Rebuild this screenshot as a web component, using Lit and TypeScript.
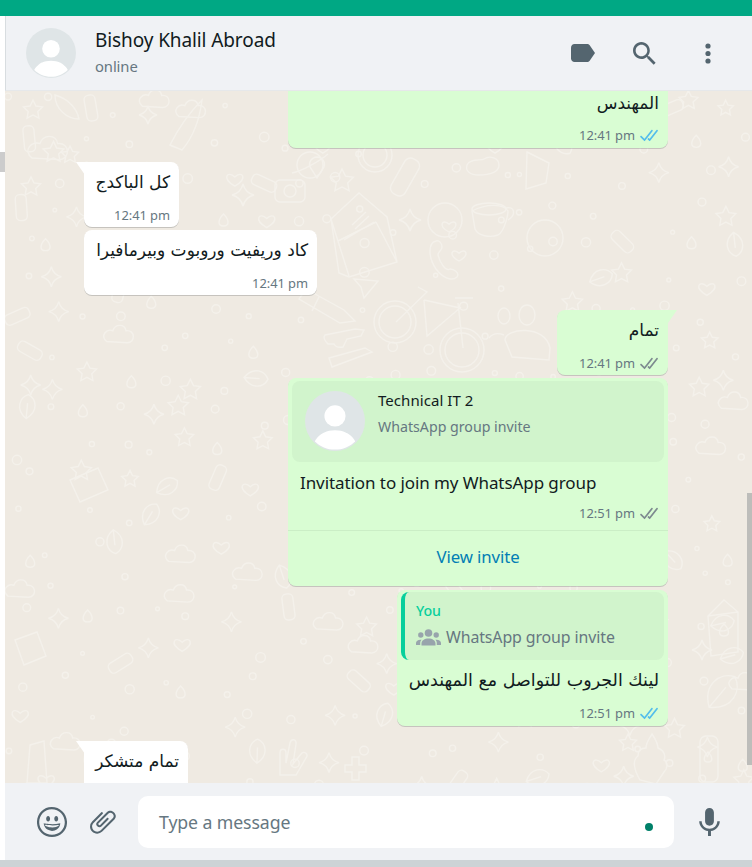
import { LitElement, html, css, svg } from "lit";
import { customElement } from "lit/decorators.js";

const DBL = "M15.01 3.316l-.478-.372a.365.365 0 0 0-.51.063L8.666 9.879a.32.32 0 0 1-.484.033l-.358-.325a.319.319 0 0 0-.484.032l-.378.483a.418.418 0 0 0 .036.541l1.32 1.266c.143.14.361.125.484-.033l6.272-8.048a.366.366 0 0 0-.064-.512zm-4.1 0l-.478-.372a.365.365 0 0 0-.51.063L4.566 9.879a.32.32 0 0 1-.484.033L1.891 7.769a.366.366 0 0 0-.515.006l-.423.433a.364.364 0 0 0 .006.514l3.258 3.185c.143.14.361.125.484-.033l6.272-8.048a.365.365 0 0 0-.063-.51z";

const avatar = (size: number) => html`<svg class="avatar" width=${size} height=${size} viewBox="0 0 212 212"><circle cx="106" cy="106" r="106" fill="#dfe5e7"/><path fill="#fff" d="M173.561 171.615a62.767 62.767 0 0 0-2.065-2.955 67.7 67.7 0 0 0-2.608-3.299 70.112 70.112 0 0 0-3.184-3.527 71.097 71.097 0 0 0-5.924-5.47 72.458 72.458 0 0 0-10.204-7.026 75.2 75.2 0 0 0-5.98-3.055c-.062-.028-.118-.059-.18-.087-9.792-4.44-22.106-7.529-37.416-7.529s-27.624 3.089-37.416 7.529c-.338.153-.653.318-.985.474a75.37 75.37 0 0 0-6.229 3.298 72.589 72.589 0 0 0-9.15 6.395 71.243 71.243 0 0 0-5.924 5.47 70.064 70.064 0 0 0-3.184 3.527 67.142 67.142 0 0 0-2.609 3.299 63.292 63.292 0 0 0-2.065 2.955 56.33 56.33 0 0 0-1.447 2.324c-.033.056-.073.119-.104.174a47.92 47.92 0 0 0-1.07 1.926c-.559 1.068-.818 1.678-.818 1.678v.398c18.285 17.927 43.322 28.985 70.945 28.985 27.678 0 52.761-11.103 71.055-29.095v-.289s-.619-1.45-1.992-3.778a58.346 58.346 0 0 0-1.446-2.322z"/><circle cx="106" cy="88" r="37.4" fill="#fff"/></svg>`;

const checks = (read: boolean) => html`<svg class="checks" width="20" height="19" viewBox="0 0 16 15"><path fill=${read ? "#53bdeb" : "#7d8a8f"} d=${DBL}/></svg>`;

const star = (x: number, y: number, r: number) => {
  let d = "";
  for (let i = 0; i < 10; i++) {
    const a = -Math.PI / 2 + (i * Math.PI) / 5;
    const q = i % 2 ? r * 0.5 : r;
    d += `${i ? "L" : "M"}${(x + q * Math.cos(a)).toFixed(1)} ${(y + q * Math.sin(a)).toFixed(1)}`;
  }
  return svg`<path d="${d}Z"/>`;
};
const sparkle = (x: number, y: number, r: number) => {
  const k = r * 0.2;
  return svg`<path d="M${x} ${y - r}Q${x + k} ${y - k} ${x + r} ${y}Q${x + k} ${y + k} ${x} ${y + r}Q${x - k} ${y + k} ${x - r} ${y}Q${x - k} ${y - k} ${x} ${y - r}Z"/>`;
};
const heart = (x: number, y: number, s: number) =>
  svg`<path d="M${x} ${y + s}C${x - 2 * s} ${y - 0.1 * s} ${x - s} ${y - 1.3 * s} ${x} ${y - 0.3 * s}C${x + s} ${y - 1.3 * s} ${x + 2 * s} ${y - 0.1 * s} ${x} ${y + s}Z"/>`;
const blob = (x: number, y: number, s: number) =>
  svg`<path d="M${x - s} ${y + 0.5 * s}C${x - 1.6 * s} ${y} ${x - s} ${y - 0.6 * s} ${x - 0.5 * s} ${y - 0.4 * s}C${x - 0.3 * s} ${y - s} ${x + 0.5 * s} ${y - s} ${x + 0.6 * s} ${y - 0.4 * s}C${x + 1.4 * s} ${y - 0.5 * s} ${x + 1.4 * s} ${y + 0.6 * s} ${x + 0.7 * s} ${y + 0.6 * s}Z"/>`;
const capsule = (x: number, y: number, w: number, h: number, rot: number) =>
  svg`<rect x=${x - w / 2} y=${y - h / 2} width=${w} height=${h} rx=${Math.min(w, h) / 2.5} transform="rotate(${rot} ${x} ${y})"/>`;
const drop = (x: number, y: number, s: number) =>
  svg`<path d="M${x} ${y - s}C${x + s} ${y} ${x + s} ${y + s} ${x} ${y + s}C${x - s} ${y + s} ${x - s} ${y} ${x} ${y - s}Z"/>`;
const leaf = (x: number, y: number, s: number, rot: number) =>
  svg`<path transform="rotate(${rot} ${x} ${y})" d="M${x} ${y + s}C${x - s} ${y + 0.3 * s} ${x - 0.7 * s} ${y - 0.7 * s} ${x} ${y - s}C${x + 0.7 * s} ${y - 0.7 * s} ${x + s} ${y + 0.3 * s} ${x} ${y + s}ZM${x} ${y + s}V${y - 0.3 * s}"/>`;

function scatter() {
  const out: unknown[] = [];
  let seed = 23;
  const rnd = () => ((seed = (seed * 16807) % 2147483647) / 2147483647);
  for (let gy = 96; gy < 790; gy += 34) {
    for (let gx = 8; gx < 750; gx += 34) {
      const x = gx + rnd() * 24;
      const y = gy + rnd() * 24;
      const k = rnd();
      const inDetail = x > 300 && x < 560 && y > 148 && y < 380;
      if (inDetail || k < 0.66) {
        if (k < 0.5) out.push(svg`<circle cx=${x} cy=${y} r=${1.8 + rnd() * 3}/>`);
        continue;
      }
      if (k < 0.72) out.push(star(x, y, 8 + rnd() * 3));
      else if (k < 0.77) out.push(sparkle(x, y, 10));
      else if (k < 0.82) out.push(blob(x, y, 12));
      else if (k < 0.87) out.push(capsule(x, y, 11, 26, rnd() * 180));
      else if (k < 0.91) out.push(heart(x, y, 7));
      else if (k < 0.95) out.push(drop(x, y, 6));
      else out.push(leaf(x, y, 12, rnd() * 180));
    }
  }
  return out;
}

const wallpaper = svg`<g transform="translate(-5 -91)">
  ${scatter()}
  ${star(342, 181, 12)}
  <path d="M331 219l28-26 28 24 10 45-48 15-10-4zM331 219l18 57M344 240l30-18M376 222l21 40M338 241l38-19M352 225l14-13 M355 229l14-13"/>
  <circle cx="395" cy="322" r="21"/><circle cx="395" cy="322" r="16"/><circle cx="462" cy="350" r="22"/><circle cx="462" cy="350" r="17"/>
  <path d="M396 322l31-30-9-5M424 300l36 8-33 28-3-36M458 303l5 45M455 298h18"/>
  ${capsule(405, 177, 16, 40, 30)}
  ${sparkle(410, 220, 11)}
  <circle cx="445" cy="220" r="17"/>${heart(449, 226, 6)}
  <path d="M472 211c15-8 32-7 36 0 0 3-3 20-10 24-8 3-20 1-23-6zM506 208c8-2 11 6 2 12"/><ellipse cx="489" cy="209" rx="17" ry="6"/>
  <circle cx="545" cy="238" r="18"/>
  <path d="M436 241c-8 2-8 16 0 28 6 8 15 13 21 8 3-4-3-8-7-8-4 3-10-6-12-14 0-4 4-4 4-8 0-4-3-7-6-6z"/>${heart(459, 255, 6)}
  <path d="M317 157a7.500 7.500 0 0 1 7 10l-7 11-7-11a7.500 7.500 0 0 1 7-10z"/>
  <circle cx="375" cy="155" r="17"/><circle cx="375" cy="155" r="12"/>
  <path d="M306 289l38 21 11 11-15 2-41-24z M319 297l-7 14"/><path d="M354 279l24 2-14 17-3-11z"/>
  <ellipse cx="504" cy="316" rx="6" ry="8"/><ellipse cx="527" cy="315" rx="8" ry="10"/><path d="M505 340c0-12 40-16 45 8l-1 12-37-3zM489 338c4-5 10-5 15-3"/>
  <path d="M467 165c3-7 14-4 17-6 6-4 15-1 15 6s-9 10-20 10c-9 0-14-4-12-10z"/>
  <path d="M325 335l30-6 9 1-3 6-14 3-4 8c-6 1-8-1-9-3h-6c-3-3-5-7-3-9zM329 358l36-10 7 4-40 15z"/>
  <path d="M527 152l22 11-3 20-20 6z"/>
  ${star(33, 110, 10)}${star(70, 155, 9)}${sparkle(148, 115, 9)}${blob(48, 150, 16)}
  <path d="M55 95c14 4 22 14 24 24-12 0-24-10-24-24zM170 145c10-20 22-35 32-45-2 16-8 36-20 50-4-2-8-3-12-5z"/>
  <circle cx="310" cy="165" r="13"/><path d="M292 173c10-2 28-12 36-19"/><rect x="275" y="180" width="30" height="22" rx="5"/><circle cx="290" cy="191" r="6"/>${sparkle(243, 195, 11)}
  <path d="M724 600l14 12v40l-27 4-3-40zM708 616l30-4"/>${drop(724, 630, 6)}${sparkle(702, 650, 10)}${leaf(722, 692, 20, 40)}
  <path d="M640 780c-6-10-8-20-2-24 0-6 4-8 8-8 0-6 4-10 6-14 4 6 6 10 6 14 6 2 8 8 6 12 4 2 4 8 0 12l-8 12z"/>${star(628, 743, 9)}
  <rect x="700" y="736" width="18" height="46" rx="6"/>${drop(708, 757, 5)}
  <path d="M280 775v-22c0-5 6-5 6 0v10l4-20c1-5 7-4 6 1l-3 20 8-10c3-4 8 0 5 4l-10 17zM345 765h7v-8h7v8h7v7h-7v8h-7v-8h-7z"/>
  <path d="M30 745l14-4 3 42H27zM15 640l22-8 9 24-22 9zM70 480l28-12 10 22-28 12z"/>
</g>`;

interface Msg { out: boolean; width: number; text: string; time?: string; read?: boolean; tail?: boolean; top: number; clipped?: boolean }
const plain: Record<string, Msg> = {
  a: { out: true, width: 380, text: "المهندس", time: "12:41 pm", read: true, top: 0, clipped: true },
  b: { out: false, width: 95, text: "كل الباكدج", time: "12:41 pm", tail: true, top: 14 },
  c: { out: false, width: 233, text: "كاد وريفيت وروبوت وبيرمافيرا", time: "12:41 pm", top: 3 },
  d: { out: true, width: 111, text: "تمام", time: "12:41 pm", read: false, tail: true, top: 15 },
  g: { out: false, width: 104, text: "تمام متشكر", tail: true, top: 15 },
};

@customElement("app-root")
export class AppRoot extends LitElement {
  static styles = css`
    :host { display: flex; flex-direction: column; width: 752px; height: 867px; overflow: hidden; background: #fff; font-family: "Noto Sans", "DejaVu Sans", sans-serif; color: #111b21; }
    .top { height: 16px; background: #00a884; flex: none; }
    .body { flex: 1; display: flex; min-height: 0; }
    .gutter { width: 5px; flex: none; padding-top: 136px; box-sizing: border-box; }
    .gutter i { display: block; height: 20px; background: #ccc; }
    .main { flex: 1; display: flex; flex-direction: column; min-width: 0; }
    header { height: 75px; flex: none; box-sizing: border-box; display: flex; align-items: center; background: #f0f2f5; border-left: 1px solid #d8dde0; border-bottom: 1px solid #e6e8ea; padding: 0 41px 0 20px; }
    .avatar { display: block; flex: none; }
    .who { margin-left: 19px; display: flex; flex-direction: column; margin-top: -2px; }
    .name { font-size: 19px; line-height: 24px; letter-spacing: -.1px; }
    .status { font-size: 14.8px; line-height: 20px; color: #667781; margin-top: 4px; letter-spacing: -.1px; }
    .actions { margin-left: auto; display: flex; align-items: center; color: #54656f; }
    .actions svg { display: block; fill: #54656f; }
    .a-label { margin-right: 38px; }
    .a-search { margin-right: 49px; }
    .chat { flex: 1; position: relative; overflow: hidden; min-height: 0; background: #efeae2; display: flex; flex-direction: column; padding: 0 84px 0 79px; }
    .paper { position: absolute; left: 0; top: 0; fill: none; stroke: #f4f1eb; stroke-width: 1.4; }
    .thumb { position: absolute; right: 0; top: 402px; width: 5px; height: 272px; background: #bdbdba; }
    .row { display: flex; position: relative; flex: none; }
    .row.out { justify-content: flex-end; }
    .bubble { position: relative; box-sizing: border-box; border-radius: 8px; background: #fff; box-shadow: 0 1px .5px rgba(11,20,26,.18); flex: none; }
    .out .bubble { background: #d9fdd3; }
    .tail::before { content: ""; position: absolute; top: 0; width: 9px; height: 13px; background: inherit; }
    .in .tail { border-top-left-radius: 0; }
    .out .tail { border-top-right-radius: 0; }
    .in .tail::before { left: -8px; clip-path: polygon(0 0, 100% 0, 100% 100%); }
    .out .tail::before { right: -9px; clip-path: polygon(0 0, 100% 0, 0 100%); }
    .plain { padding: 10px 9px 0 11px; }
    .plain.clipped { padding-top: 2px; padding-bottom: 1px; border-top-left-radius: 0; border-top-right-radius: 0; }
    .plain.clipped .meta { margin-top: 9px; }
    .plain.cut { padding-bottom: 20px; }
    .ar { direction: rtl; font-family: "DejaVu Sans", sans-serif; font-size: 17px; line-height: 21px; white-space: nowrap; }
    .meta { height: 24px; display: flex; justify-content: flex-end; align-items: center; margin-top: 10px; font-size: 12.9px; color: #667781; white-space: nowrap; letter-spacing: -.05px; }
    .meta .checks { margin-left: 4px; }
    .card { margin: 3px 4px 0; height: 81px; box-sizing: border-box; padding: 10px 13px; border-radius: 8px; background: #d1f4cc; display: flex; }
    .card-txt { margin-left: 13px; display: flex; flex-direction: column; }
    .card-title { font-size: 15px; line-height: 20px; margin-top: -1px; letter-spacing: .05px; }
    .card-sub { font-size: 14.2px; line-height: 20px; margin-top: 7px; color: #667781; letter-spacing: 0; }
    .inv { padding: 10px 9px 0 12px; }
    .inv-text { font-size: 17px; line-height: 21px; letter-spacing: -.08px; }
    .inv .line { margin-top: 8px; }
    .view { border-top: 1px solid #cbeec6; margin-top: 5px; height: 56px; padding-bottom: 5px; box-sizing: border-box; display: flex; align-items: center; justify-content: center; color: #027eb5; font-size: 16.8px; letter-spacing: -.1px; }
    .quote { margin: 2px 4px 0; height: 68px; box-sizing: border-box; border-radius: 8px; background: #d1f4cc; border-left: 4px solid #06cf9c; padding-left: 11px; display: flex; flex-direction: column; }
    .q-who { color: #06cf9c; font-size: 14.2px; line-height: 20px; margin-top: 9px; font-weight: 500; letter-spacing: -.1px; }
    .q-sub { display: flex; align-items: center; margin-top: 5px; font-size: 15.9px; line-height: 22px; color: #667781; letter-spacing: -.1px; }
    .q-sub svg { display: block; margin-right: 5px; fill: #98a4ac; flex: none; }
    .reply { padding: 10px 9px 1px 10px; }
    .reply .ar { font-size: 17.5px; }
    footer { height: 77px; flex: none; background: #f0f2f5; display: flex; align-items: center; padding-left: 32px; box-sizing: border-box; }
    footer svg { display: block; flex: none; }
    .smile { fill: #54656f; margin-right: 23px; }
    .clip { fill: #54656f; margin-right: 22px; }
    .input { width: 536px; height: 52px; flex: none; box-sizing: border-box; background: #fff; border-radius: 10px; display: flex; align-items: center; justify-content: space-between; padding: 0 21px; font-size: 17.7px; color: #667781; letter-spacing: -.1px; margin-top: 1px; }
    .dot { width: 8px; height: 8px; border-radius: 50%; background: #008069; margin: 10px 0 0; }
    .mic { fill: #54656f; margin-left: 25px; }
    .bottom { height: 7px; flex: none; background: #ccd3d6; }
  `;

  private plainRow(m: Msg) {
    return html`<div class="row ${m.out ? "out" : "in"}" style="margin-top:${m.top}px">
      <div class="bubble plain ${m.tail ? "tail" : ""} ${m.clipped ? "clipped" : ""} ${m.time ? "" : "cut"}" style="width:${m.width}px">
        <div class="ar">${m.text}</div>
        ${m.time ? html`<div class="meta">${m.time}${m.out ? checks(!!m.read) : ""}</div>` : ""}
      </div>
    </div>`;
  }

  render() {
    return html`
      <div class="top"></div>
      <div class="body">
        <div class="gutter"><i></i></div>
        <div class="main">
          <header>
            ${avatar(50)}
            <div class="who">
              <div class="name">Bishoy Khalil Abroad</div>
              <div class="status">online</div>
            </div>
            <div class="actions">
              <svg class="a-label" width="24" height="18" viewBox="0 0 24 18"><path d="M3.500 0H16c1.100 0 2 .5 2.700 1.300L24 9l-5.300 7.700c-.7.800-1.600 1.300-2.700 1.300H3.500C1.600 18 0 16.400 0 14.500v-11C0 1.600 1.600 0 3.500 0z"/></svg>
              <svg class="a-search" width="23" height="23" viewBox="3 3 18.200 18.200"><path d="M15.900 14.300H15l-.3-.3c1-1.100 1.600-2.700 1.600-4.300 0-3.700-3-6.700-6.700-6.700S3 6 3 9.700s3 6.700 6.700 6.700c1.600 0 3.200-.6 4.300-1.600l.3.3v.8l5.100 5.100 1.500-1.500-5-5.200zm-6.200 0c-2.600 0-4.600-2.100-4.600-4.600s2.100-4.600 4.600-4.600 4.600 2.100 4.600 4.600-2 4.600-4.600 4.600z"/></svg>
              <svg width="6" height="21" viewBox="0 0 6 21"><circle cx="3" cy="3" r="2.600"/><circle cx="3" cy="10.500" r="2.600"/><circle cx="3" cy="18" r="2.600"/></svg>
            </div>
          </header>
          <div class="chat">
            <svg class="paper" width="747" height="692" viewBox="0 0 747 692">${wallpaper}</svg>
            <div class="thumb"></div>
            ${this.plainRow(plain.a)}
            ${this.plainRow(plain.b)}
            ${this.plainRow(plain.c)}
            ${this.plainRow(plain.d)}
            <div class="row out" style="margin-top:3px">
              <div class="bubble" style="width:380px">
                <div class="card">
                  ${avatar(60)}
                  <div class="card-txt">
                    <div class="card-title">Technical IT 2</div>
                    <div class="card-sub">WhatsApp group invite</div>
                  </div>
                </div>
                <div class="inv">
                  <div class="inv-text">Invitation to join my WhatsApp group</div>
                  <div class="meta line">12:51 pm${checks(false)}</div>
                </div>
                <div class="view">View invite</div>
              </div>
            </div>
            <div class="row out" style="margin-top:4px">
              <div class="bubble" style="width:271px">
                <div class="quote">
                  <div class="q-who">You</div>
                  <div class="q-sub"><svg width="25" height="17" viewBox="0 0 25 17"><circle cx="12.500" cy="4" r="3.800"/><circle cx="4.800" cy="6" r="2.700"/><circle cx="20.200" cy="6" r="2.700"/><path d="M5.500 16.500v-2c0-3 3-5 7-5s7 2 7 5v2zM0 16v-2c0-2 1.800-3.300 4.500-3.300.4 0 .8 0 1.100.1-.9.900-1.400 2.100-1.400 3.500V16zM25 16v-2c0-2-1.800-3.300-4.500-3.300-.4 0-.8 0-1.100.1.900.9 1.400 2.100 1.400 3.500V16z"/></svg>WhatsApp group invite</div>
                </div>
                <div class="reply">
                  <div class="ar">لينك الجروب للتواصل مع المهندس</div>
                  <div class="meta">12:51 pm${checks(true)}</div>
                </div>
              </div>
            </div>
            ${this.plainRow(plain.g)}
          </div>
          <footer>
            <svg class="smile" width="30" height="30" viewBox="1 1 22 22"><path d="M9.153 11.603c.795 0 1.439-.879 1.439-1.962s-.644-1.962-1.439-1.962-1.439.879-1.439 1.962.644 1.962 1.439 1.962zm-3.204 1.362c-.026-.307-.131 5.218 6.063 5.551 6.066-.25 6.066-5.551 6.066-5.551-6.078 1.416-12.129 0-12.129 0zm11.363 1.108s-.669 1.959-5.051 1.959c-3.505 0-5.388-1.164-5.607-1.959 0 0 5.912 1.055 10.658 0zM11.804 1.011C5.609 1.011.978 6.033.978 12.228s4.826 10.761 11.021 10.761S23.020 18.423 23.020 12.228c.001-6.195-5.021-11.217-11.216-11.217zM12 21.354c-5.273 0-9.381-3.886-9.381-9.159s3.942-9.548 9.215-9.548 9.548 4.275 9.548 9.548c-.001 5.272-4.109 9.159-9.382 9.159zm3.108-9.751c.795 0 1.439-.879 1.439-1.962s-.644-1.962-1.439-1.962-1.439.879-1.439 1.962.644 1.962 1.439 1.962z"/></svg>
            <svg class="clip" width="26" height="26" viewBox="1.800 1.800 20.400 20.400"><path d="M1.816 15.556v.002c0 1.502.584 2.912 1.646 3.972s2.472 1.647 3.974 1.647a5.580 5.580 0 0 0 3.972-1.645l9.547-9.548c.769-.768 1.147-1.767 1.058-2.817-.079-.968-.548-1.927-1.319-2.698-1.594-1.592-4.068-1.711-5.517-.262l-7.916 7.915c-.881.881-.792 2.250.214 3.261.959.958 2.423 1.053 3.263.215l5.511-5.512c.28-.28.267-.722.053-.936l-.244-.244c-.191-.191-.567-.349-.957.04l-5.506 5.506c-.18.18-.635.127-.976-.214-.098-.097-.576-.613-.213-.973l7.915-7.917c.818-.817 2.267-.699 3.230.262.5.501.802 1.100.849 1.685.051.573-.156 1.111-.589 1.543l-9.547 9.549a3.970 3.970 0 0 1-2.829 1.171 3.975 3.975 0 0 1-2.830-1.173 3.973 3.973 0 0 1-1.172-2.828c0-1.071.415-2.076 1.172-2.830l7.209-7.211c.157-.157.264-.579.028-.814L11.500 4.360a.572.572 0 0 0-.834.018l-7.205 7.207a5.577 5.577 0 0 0-1.645 3.971z"/></svg>
            <div class="input"><span>Type a message</span><span class="dot"></span></div>
            <svg class="mic" width="21" height="28" viewBox="3.760 .8 16.500 22.400"><path d="M11.999 14.942c2.001 0 3.531-1.530 3.531-3.531V4.350c0-2.001-1.530-3.531-3.531-3.531S8.469 2.350 8.469 4.350v7.061c0 2.001 1.530 3.531 3.530 3.531zm6.238-3.530c0 3.531-2.942 6.002-6.237 6.002s-6.237-2.471-6.237-6.002H3.761c0 4.001 3.178 7.297 7.061 7.885v3.884h2.354v-3.884c3.884-.588 7.061-3.884 7.061-7.885h-2z"/></svg>
          </footer>
        </div>
      </div>
      <div class="bottom"></div>
    `;
  }
}
